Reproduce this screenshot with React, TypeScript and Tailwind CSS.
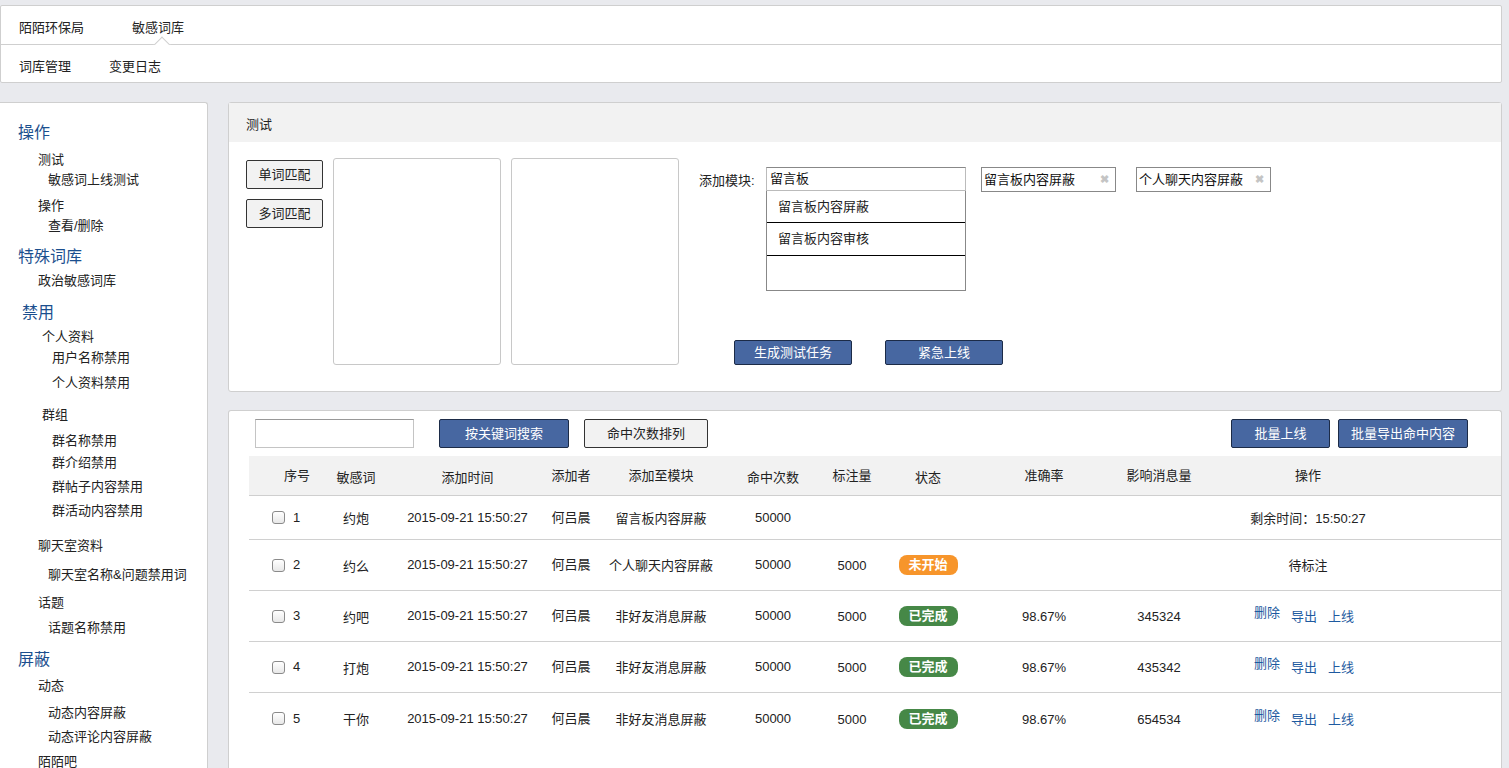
import React from "react";

const FONT = { fontFamily: '"Liberation Sans", "Noto Sans CJK SC", sans-serif' };

type NavItem = { label: string; cls: string };

// sidebar items, spacing follows the original page which is not regular
const sideItems: NavItem[] = [
  { label: "操作", cls: "pl-[18px] text-[16px] text-[#1b4f8e]" },
  { label: "测试", cls: "mt-[7px] pl-[38px]" },
  { label: "敏感词上线测试", cls: "pl-[48px]" },
  { label: "操作", cls: "mt-[6px] pl-[38px]" },
  { label: "查看/删除", cls: "pl-[48px]" },
  { label: "特殊词库", cls: "mt-[11px] pl-[18px] text-[16px] text-[#1b4f8e]" },
  { label: "政治敏感词库", cls: "mt-[4px] pl-[38px]" },
  { label: "禁用", cls: "mt-[12px] pl-[22px] text-[16px] text-[#1b4f8e]" },
  { label: "个人资料", cls: "mt-[4px] pl-[42px]" },
  { label: "用户名称禁用", cls: "mt-[1px] pl-[52px]" },
  { label: "个人资料禁用", cls: "mt-[5px] pl-[52px]" },
  { label: "群组", cls: "mt-[12px] pl-[42px]" },
  { label: "群名称禁用", cls: "mt-[6px] pl-[52px]" },
  { label: "群介绍禁用", cls: "mt-[2px] pl-[52px]" },
  { label: "群帖子内容禁用", cls: "mt-[4px] pl-[52px]" },
  { label: "群活动内容禁用", cls: "mt-[4px] pl-[52px]" },
  { label: "聊天室资料", cls: "mt-[15px] pl-[38px]" },
  { label: "聊天室名称&问题禁用词", cls: "mt-[9px] pl-[48px]" },
  { label: "话题", cls: "mt-[8px] pl-[38px]" },
  { label: "话题名称禁用", cls: "mt-[5px] pl-[48px]" },
  { label: "屏蔽", cls: "mt-[12px] pl-[18px] text-[16px] text-[#1b4f8e]" },
  { label: "动态", cls: "mt-[6px] pl-[38px]" },
  { label: "动态内容屏蔽", cls: "mt-[7px] pl-[48px]" },
  { label: "动态评论内容屏蔽", cls: "mt-[4px] pl-[48px]" },
  { label: "陌陌吧", cls: "mt-[5px] pl-[38px]" },
];

type Row = {
  id: number;
  word: string;
  module: string;
  marks?: string;
  status?: "todo" | "done";
  rate?: string;
  affect?: string;
  op: "timer" | "pending" | "links";
};

const rows: Row[] = [
  { id: 1, word: "约炮", module: "留言板内容屏蔽", op: "timer" },
  { id: 2, word: "约么", module: "个人聊天内容屏蔽", marks: "5000", status: "todo", op: "pending" },
  { id: 3, word: "约吧", module: "非好友消息屏蔽", marks: "5000", status: "done", rate: "98.67%", affect: "345324", op: "links" },
  { id: 4, word: "打炮", module: "非好友消息屏蔽", marks: "5000", status: "done", rate: "98.67%", affect: "435342", op: "links" },
  { id: 5, word: "干你", module: "非好友消息屏蔽", marks: "5000", status: "done", rate: "98.67%", affect: "654534", op: "links" },
];

const cols =
  "grid grid-cols-[78px_58px_165px_42px_138px_86px_72px_80px_152px_78px_220px_1fr] items-center";

function BlueButton({ label, className }: { label: string; className: string }) {
  return (
    <button className={`border border-[#1c2b47] bg-[#4767a1] text-white text-[13px] rounded-[2px] ${className}`}>
      {label}
    </button>
  );
}

function GreyButton({ label, className }: { label: string; className: string }) {
  return (
    <button className={`border border-[#333] bg-[#f2f2f2] text-[#222] text-[13px] rounded-[2px] ${className}`}>
      {label}
    </button>
  );
}

function Tag({ label, className }: { label: string; className: string }) {
  return (
    <div className={`flex h-[25px] items-center justify-between border border-[#888] pl-[2px] pr-[6px] text-[13px] text-[#111] ${className}`}>
      <span>{label}</span>
      <span className="text-[11px] font-bold text-[#c4c4c4]">✖</span>
    </div>
  );
}

function Badge({ status }: { status: "todo" | "done" }) {
  const todo = status === "todo";
  return (
    <span
      className={`inline-flex h-[20px] w-[59px] items-center justify-center rounded-[8px] text-[13px] font-bold text-white ${
        todo ? "bg-[#f7952b]" : "bg-[#468847]"
      }`}
    >
      {todo ? "未开始" : "已完成"}
    </span>
  );
}

function Checkbox() {
  return <span className="inline-block h-[13px] w-[13px] rounded-[3px] border border-[#8a8a8a] bg-gradient-to-b from-white to-[#e8e8e8]" />;
}

export default function App() {
  return (
    <div style={FONT} className="min-h-[768px] w-[1509px] overflow-hidden bg-[#e9eaee] pt-[5px] text-[13px] text-[#222]">
      {/* top nav */}
      <div className="w-[1502px] rounded-[2px] border border-[#cfcfcf] bg-white">
        <div className="relative flex h-[39px] items-center border-b border-[#cfcfcf] pt-[6px]">
          <span className="ml-[18px]">陌陌环保局</span>
          <span className="ml-[48px]">敏感词库</span>
          {/* little caret under the active tab */}
          <span className="absolute bottom-[-1px] left-[152px] h-[9px] w-[18px] overflow-hidden">
            <span className="absolute left-[3px] top-[3px] h-[12px] w-[12px] rotate-45 border-l border-t border-[#cfcfcf] bg-white" />
          </span>
        </div>
        <div className="flex h-[37px] items-center pt-[6px]">
          <span className="ml-[18px]">词库管理</span>
          <span className="ml-[38px]">变更日志</span>
        </div>
      </div>

      <div className="mt-[19px] flex items-start gap-[20px]">
        {/* sidebar */}
        <div className="h-[680px] w-[208px] shrink-0 rounded-tr-[3px] border-r border-t border-[#cfcfcf] bg-white pt-[20px]">
          {sideItems.map((it, i) => (
            <div key={i} className={`leading-[20px] whitespace-nowrap ${it.cls}`}>
              {it.label}
            </div>
          ))}
        </div>

        <div className="flex w-[1274px] flex-col gap-[18px]">
          {/* test panel */}
          <div className="h-[290px] rounded-[3px] border border-[#cfcfcf] bg-white">
            <div className="flex h-[39px] items-center bg-[#f2f2f2] pl-[17px] pt-[5px]">测试</div>
            <div className="flex pl-[17px] pt-[16px]">
              <div className="flex flex-col gap-[10px] pt-[2px]">
                <GreyButton label="单词匹配" className="h-[29px] w-[77px]" />
                <GreyButton label="多词匹配" className="h-[29px] w-[77px]" />
              </div>
              <div className="ml-[10px] h-[207px] w-[168px] rounded-[3px] border border-[#c8c8c8]" />
              <div className="ml-[10px] h-[207px] w-[168px] rounded-[3px] border border-[#c8c8c8]" />
              <div className="ml-[20px] pt-[9px]">
                <div className="flex items-start">
                  <span className="mt-[4px] w-[67px]">添加模块:</span>
                  <div className="w-[200px]">
                    <div className="flex h-[24px] items-center border border-[#bbb] border-t-[#888] pl-[3px] text-[#111]">留言板</div>
                    <div className="border-x border-b border-[#888]">
                      <div className="flex h-[32px] items-center border-b border-black pl-[11px]">留言板内容屏蔽</div>
                      <div className="flex h-[33px] items-center border-b border-black pl-[11px]">留言板内容审核</div>
                      <div className="h-[34px]" />
                    </div>
                  </div>
                  <Tag label="留言板内容屏蔽" className="ml-[15px] w-[135px]" />
                  <Tag label="个人聊天内容屏蔽" className="ml-[20px] w-[135px]" />
                </div>
                <div className="ml-[35px] mt-[49px] flex gap-[33px]">
                  <BlueButton label="生成测试任务" className="h-[25px] w-[118px]" />
                  <BlueButton label="紧急上线" className="h-[25px] w-[118px]" />
                </div>
              </div>
            </div>
          </div>

          {/* list panel */}
          <div className="h-[360px] rounded-t-[3px] border-l border-r border-t border-[#cfcfcf] bg-white pl-[20px] pt-[8px]">
            <div className="flex h-[29px] items-center pl-[6px] pr-[33px]">
              <div className="h-[29px] w-[159px] border border-[#c4c4c4] border-t-[#999]" />
              <BlueButton label="按关键词搜索" className="ml-[25px] h-[29px] w-[130px]" />
              <GreyButton label="命中次数排列" className="ml-[15px] h-[29px] w-[124px]" />
              <div className="flex-1" />
              <BlueButton label="批量上线" className="h-[29px] w-[99px]" />
              <BlueButton label="批量导出命中内容" className="ml-[8px] h-[29px] w-[130px]" />
            </div>

            <div className={`${cols} mt-[8px] h-[40px] border-b border-[#cfcfcf] bg-[#f2f2f2] text-center`}>
              <span className="pl-[35px] text-left">序号</span>
              <span className="mt-[4px]">敏感词</span>
              <span className="mt-[4px]">添加时间</span>
              <span>添加者</span>
              <span>添加至模块</span>
              <span className="mt-[4px]">命中次数</span>
              <span>标注量</span>
              <span className="mt-[4px]">状态</span>
              <span>准确率</span>
              <span>影响消息量</span>
              <span>操作</span>
              <span />
            </div>

            {rows.map((r, i) => (
              <div
                key={r.id}
                className={`${cols} text-center ${i === 0 ? "h-[44px]" : "h-[51px]"} ${
                  i < rows.length - 1 ? "border-b border-[#d0d0d0]" : ""
                }`}
              >
                <span className="flex items-center gap-[8px] pl-[23px] text-left">
                  <Checkbox />
                  <span>{r.id}</span>
                </span>
                <span className="mt-[3px]">{r.word}</span>
                <span className="whitespace-nowrap">2015-09-21 15:50:27</span>
                <span className="whitespace-nowrap">何吕晨</span>
                <span className="mt-[2px] whitespace-nowrap">{r.module}</span>
                <span>50000</span>
                <span className="mt-[2px]">{r.marks ?? ""}</span>
                <span>{r.status ? <Badge status={r.status} /> : null}</span>
                <span className="mt-[2px]">{r.rate ?? ""}</span>
                <span className="mt-[2px]">{r.affect ?? ""}</span>
                <span className="mt-[2px]">
                  {r.op === "timer" && <span className="whitespace-nowrap">剩余时间：15:50:27</span>}
                  {r.op === "pending" && <span>待标注</span>}
                  {r.op === "links" && (
                    <span className="flex justify-center gap-[11px] pr-[8px] text-[#1e5aa0]">
                      <span className="-mt-[4px]">删除</span>
                      <span>导出</span>
                      <span>上线</span>
                    </span>
                  )}
                </span>
                <span />
              </div>
            ))}
          </div>
        </div>
      </div>
    </div>
  );
}
